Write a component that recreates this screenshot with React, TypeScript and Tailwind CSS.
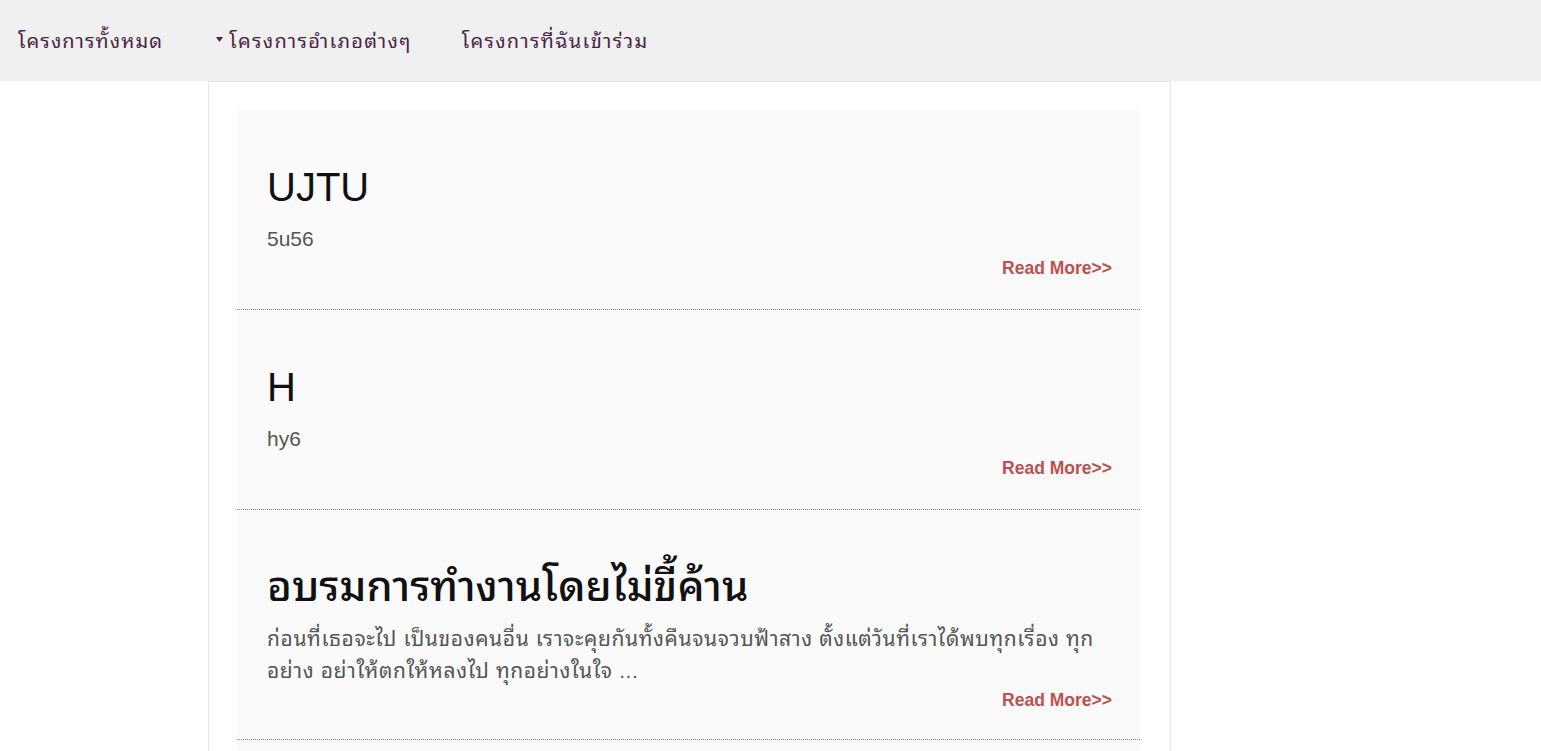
import React from "react";

const cards: { title: string; desc: React.ReactNode; thai: boolean }[] = [
  { title: "UJTU", desc: "5u56", thai: false },
  { title: "H", desc: "hy6", thai: false },
  {
    title: "อบรมการทำงานโดยไม่ขี้ค้าน",
    desc: (
      <>
        ก่อนที่เธอจะไป เป็นของคนอื่น เราจะคุยกันทั้งคืนจนจวบฟ้าสาง ตั้งแต่วันที่เราได้พบทุกเรื่อง ทุก
        <wbr />
        อย่าง อย่าให้ตกให้หลงไป ทุกอย่างในใจ ...
      </>
    ),
    thai: true,
  },
];

export default function App() {
  return (
    <div
      className="min-h-[751px] bg-white overflow-hidden"
      style={{ fontFamily: '"Liberation Sans", Tahoma, "Noto Sans Thai Looped", Garuda, Loma, "Noto Sans Thai", sans-serif' }}
    >
      <nav className="h-[81px] bg-[#f0f0f0] flex items-center text-[20px] tracking-[1.1px] text-[#4a2545]">
        <a className="ml-[18px] leading-[24px]">โครงการทั้งหมด</a>
        <a className="ml-[53px] flex items-center leading-[24px] tracking-[1.3px]">
          <svg width="7" height="5" viewBox="0 0 7 5" className="mr-[6px] mb-[3px]">
            <polygon points="0,0 7,0 3.5,5" fill="#4a2545" />
          </svg>
          โครงการอำเภอต่างๆ
        </a>
        <a className="ml-[50px] leading-[24px] tracking-[1.3px]">โครงการที่ฉันเข้าร่วม</a>
      </nav>
      <div className="ml-[208px] w-[963px] border-x border-t border-[#e3e3e3] pl-[28px] pr-[30px] pt-[28px] h-[670px]">
        {cards.map((c, i) => (
          <div
            key={i}
            className={
              c.thai
                ? "bg-[#fafafa] border-b border-dotted border-[#8a8a8a] pt-[53px] pl-[30px] pr-[28px] pb-[28px]"
                : "bg-[#fafafa] border-b border-dotted border-[#8a8a8a] pt-[53px] pl-[30px] pr-[28px] pb-[30px]"
            }
          >
            <h2
              className={
                c.thai
                  ? "text-[42px] leading-[48px] font-medium text-[#111] mb-[12px]"
                  : "text-[40px] leading-[48px] text-[#111] mb-[12px]"
              }
            >
              {c.title}
            </h2>
            <p
              className={
                c.thai
                  ? "text-[21px] leading-[32px] tracking-[0.6px] text-[#555]"
                  : "text-[21px] leading-[32px] text-[#555]"
              }
            >
              {c.desc}
            </p>
            <div className="mt-[2px] text-right text-[17.5px] leading-[22px] font-bold text-[#c0504d]">
              Read More&gt;&gt;
            </div>
          </div>
        ))}
        <div className="bg-[#fafafa] h-[40px]" />
      </div>
    </div>
  );
}
